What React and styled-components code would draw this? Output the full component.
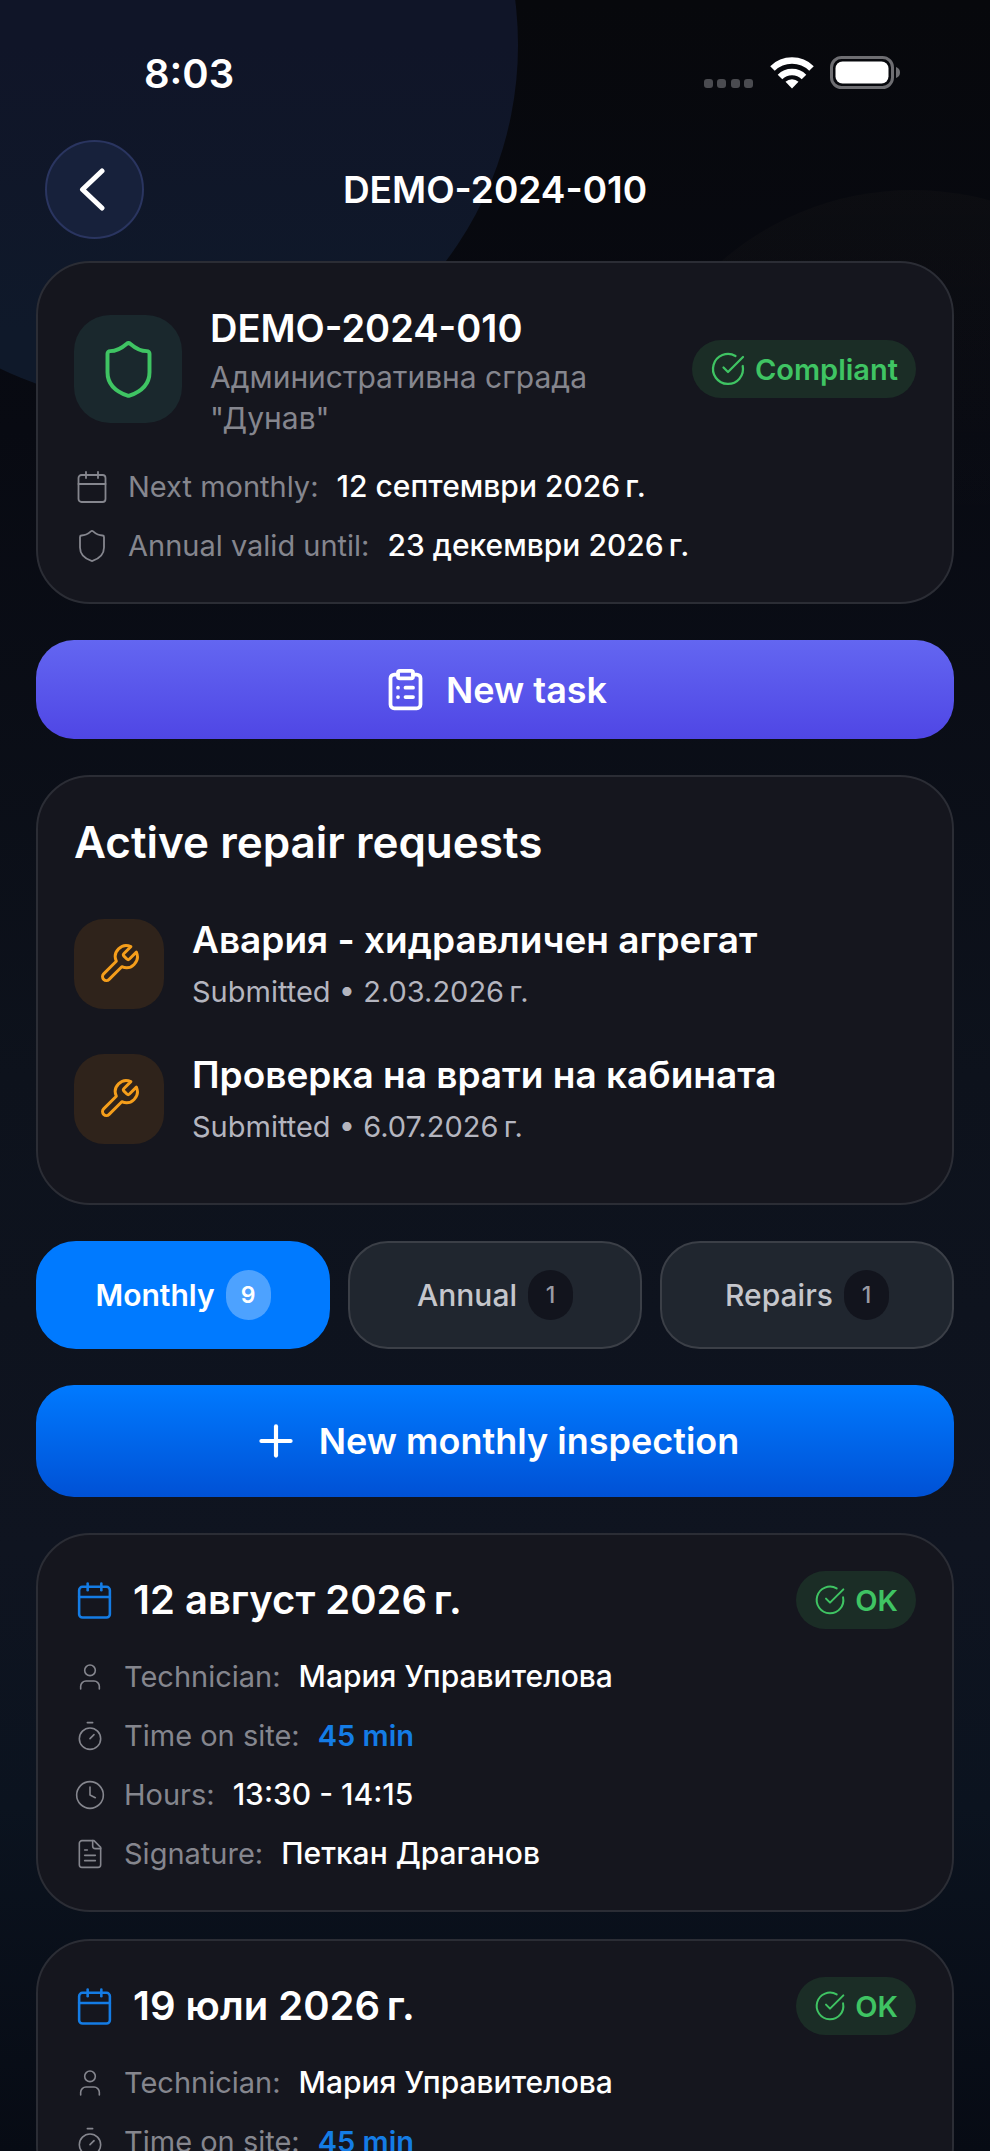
import { useState } from "react";
import styled, { createGlobalStyle, css } from "styled-components";
import {
  Calendar,
  CircleCheckBig,
  ClipboardList,
  Clock,
  Plus,
  Shield,
  Timer,
  User,
} from "lucide-react";

const GlobalStyle = createGlobalStyle`
  * {
    box-sizing: border-box;
  }

  body {
    margin: 0;
    background: #090b12;
    color: #ffffff;
    font-family: "Inter", "Noto Sans", sans-serif;
    -webkit-font-smoothing: antialiased;
  }

  button {
    font-family: inherit;
    cursor: pointer;
  }

  h1, h2, h3, p, dl, dd {
    margin: 0;
  }
`;

const Screen = styled.div`
  position: relative;
  height: 100vh;
  overflow-x: hidden;
  overflow-y: auto;
  scrollbar-width: none;
  background: linear-gradient(180deg, #07080c 0%, #080a12 20%, #0d121c 50%, #0f1420 72%, #0b131f 84%, #070b14 100%);
`;

const Glow = styled.div`
  position: absolute;
  width: 720px;
  height: 720px;
  left: -202px;
  top: -315px;
  border-radius: 50%;
  background: linear-gradient(180deg, #101528 50%, #0f192a 90%);
`;

const WarmGlow = styled.div`
  position: absolute;
  width: 585px;
  height: 585px;
  right: -215px;
  top: 190px;
  border-radius: 50%;
  background: linear-gradient(180deg, rgba(255, 220, 150, 0.02), rgba(255, 220, 150, 0) 60%);
`;

const StatusBar = styled.header`
  position: relative;
  display: flex;
  align-items: center;
  justify-content: space-between;
  height: 140px;
  padding: 6px 90px 0 144px;
`;

const StatusTime = styled.span`
  font-size: 40px;
  font-weight: 600;
`;

const StatusIcons = styled.div`
  display: flex;
  align-items: center;
  gap: 16px;
`;

const NavBar = styled.nav`
  position: relative;
  display: grid;
  grid-template-columns: 99px 1fr 99px;
  align-items: center;
  padding: 0 45px;
`;

const BackButton = styled.button`
  display: flex;
  align-items: center;
  justify-content: center;
  width: 99px;
  height: 99px;
  padding: 0 6px 0 0;
  border: 2px solid #2a3560;
  border-radius: 50%;
  background: #17213b;
  color: #ffffff;
`;

const NavTitle = styled.h1`
  text-align: center;
  font-size: 37px;
  font-weight: 600;
`;

const Content = styled.main`
  position: relative;
  display: flex;
  flex-direction: column;
  gap: 36px;
  padding: 22px 36px 36px;
`;

const Card = styled.section`
  padding: 36px;
  border: 2px solid #2b2d35;
  border-radius: 54px;
  background: #15161e;
`;

const CardHead = styled.div`
  display: flex;
  align-items: center;
  gap: ${({ $gap }) => $gap}px;
`;

const HeadText = styled.div`
  flex: 1;
  min-width: 0;
`;

const UnitTitle = styled.h2`
  font-size: 38px;
  line-height: 58px;
  font-weight: 600;
`;

const UnitPlace = styled.p`
  color: #85868e;
  font-size: 30px;
  line-height: 41px;
`;

const IconTile = styled.span`
  display: flex;
  flex: none;
  align-items: center;
  justify-content: center;
  width: ${({ $size }) => $size}px;
  height: ${({ $size }) => $size}px;
  border-radius: ${({ $size }) => $size / 3}px;
  background: ${({ $bg }) => $bg};
  color: ${({ $color }) => $color};
`;

const Pill = styled.span`
  display: flex;
  flex: none;
  align-items: center;
  gap: 9px;
  height: 58px;
  padding: 0 18px;
  border-radius: 29px;
  background: #1b2d26;
  color: #3fc463;
  font-size: 29px;
  font-weight: 600;
`;

const Rows = styled.dl`
  display: flex;
  flex-direction: column;
  gap: 18px;
  padding-top: 27px;
`;

const Row = styled.div`
  display: flex;
  align-items: center;
  gap: 18px;
  font-size: 29px;
  line-height: 41px;
  color: #85868e;

  svg {
    flex: none;
  }
`;

const RowValue = styled.dd`
  color: ${({ $accent }) => ($accent ? "#147ce5" : "#ffffff")};
  font-size: ${({ $accent }) => ($accent ? 29 : 30)}px;
  font-weight: ${({ $accent }) => ($accent ? 600 : 500)};
`;

const ActionButton = styled.button`
  display: flex;
  align-items: center;
  justify-content: center;
  gap: 18px;
  height: ${({ $height }) => $height}px;
  border: none;
  border-radius: 38px;
  background: linear-gradient(180deg, ${({ $from }) => $from}, ${({ $to }) => $to});
  color: #ffffff;
  font-size: 36px;
  font-weight: 600;
`;

const SectionTitle = styled.h2`
  font-size: 44px;
  line-height: 58px;
  font-weight: 600;
`;

const RequestList = styled.ul`
  display: flex;
  flex-direction: column;
  gap: 38px;
  margin: 0;
  padding: 44px 0 20px;
  list-style: none;
`;

const Request = styled.li`
  display: flex;
  align-items: center;
  gap: 28px;
`;

const RequestText = styled.div`
  display: flex;
  flex-direction: column;
  gap: 7px;
`;

const RequestTitle = styled.h3`
  font-size: 37px;
  line-height: 50px;
  font-weight: 600;
`;

const RequestMeta = styled.p`
  color: #b4b5bf;
  font-size: 29px;
  line-height: 40px;
`;

const Tabs = styled.div`
  display: grid;
  grid-template-columns: repeat(3, 1fr);
  gap: 18px;
`;

const TabCount = styled.span`
  display: flex;
  align-items: center;
  justify-content: center;
  min-width: 45px;
  height: 50px;
  border-radius: 23px;
  background: #12141d;
  color: #9a9ba3;
  font-size: 23px;
`;

const Tab = styled.button`
  display: flex;
  align-items: center;
  justify-content: center;
  gap: 11px;
  height: 108px;
  border: 2px solid #3b3f47;
  border-radius: 40px;
  background: #20262f;
  color: #c5c6cc;
  font-size: 30px;
  font-weight: 500;

  ${({ $active }) =>
    $active &&
    css`
      border-color: #007aff;
      background: #007aff;
      color: #ffffff;
      font-weight: 600;

      ${TabCount} {
        background: #4da2ff;
        color: #ffffff;
      }
    `}
`;

const Inspections = styled.div`
  display: flex;
  flex-direction: column;
  gap: 27px;
`;

const InspectionDate = styled.h3`
  flex: 1;
  font-size: 40px;
  line-height: 58px;
  font-weight: 600;
`;

const requests = [
  { title: "Авария - хидравличен агрегат", date: "2.03.2026\u202fг." },
  { title: "Проверка на врати на кабината", date: "6.07.2026\u202fг." },
];

const tabs = [
  { name: "Monthly", count: 9 },
  { name: "Annual", count: 1 },
  { name: "Repairs", count: 1 },
];

const inspections = [
  {
    date: "12 август 2026\u202fг.",
    technician: "Мария Управителова",
    time: "45 min",
    hours: "13:30 - 14:15",
    signature: "Петкан Драганов",
  },
  {
    date: "19 юли 2026\u202fг.",
    technician: "Мария Управителова",
    time: "45 min",
  },
];

function Signal() {
  return (
    <svg width="50" height="32" viewBox="0 0 50 32" fill="#4a4b50">
      <rect x="0" y="22" width="9" height="9" rx="3" />
      <rect x="13" y="22" width="9" height="9" rx="3" />
      <rect x="27" y="22" width="9" height="9" rx="3" />
      <rect x="40" y="22" width="9" height="9" rx="3" />
    </svg>
  );
}

function Wifi() {
  return (
    <svg width="44" height="32" viewBox="0 0 44 32" fill="none" stroke="#fff" strokeWidth="6.5">
      <path d="M2.5 11.500a28 28 0 0 1 39 0" />
      <path d="M10 20a17 17 0 0 1 24 0" />
      <path d="M22 31.500l-6.500-6.800a9.500 9.500 0 0 1 13 0z" fill="#fff" stroke="none" />
    </svg>
  );
}

function Battery() {
  return (
    <svg width="70" height="34" viewBox="0 0 70 34" fill="none">
      <rect x="1.500" y="1.500" width="61" height="30" rx="10" stroke="#6e6e72" strokeWidth="3" />
      <rect x="5.500" y="5.500" width="53" height="22" rx="7" fill="#fff" />
      <path d="M66 11c3 1 4 3 4 5.500s-1 4.500-4 5.500z" fill="#6e6e72" />
    </svg>
  );
}

function BackArrow() {
  return (
    <svg
      width="26"
      height="43"
      viewBox="0 0 26 43"
      fill="none"
      stroke="currentColor"
      strokeWidth="5"
      strokeLinecap="round"
      strokeLinejoin="round"
    >
      <path d="M23 3L3.500 21.500L23 40" />
    </svg>
  );
}

function Wrench() {
  return (
    <svg
      width="44"
      height="44"
      viewBox="0 0 24 24"
      fill="none"
      stroke="currentColor"
      strokeWidth="1.6"
      strokeLinecap="round"
      strokeLinejoin="round"
    >
      <path d="M14.7 6.3a1 1 0 0 0 0 1.4l1.6 1.6a1 1 0 0 0 1.4 0l3.77-3.77a6 6 0 0 1-7.94 7.94l-6.91 6.91a2.12 2.12 0 0 1-3-3l6.91-6.91a6 6 0 0 1 7.94-7.94l-3.76 3.76z" />
    </svg>
  );
}

function FileText({ size }) {
  return (
    <svg
      width={size}
      height={size}
      viewBox="0 0 24 24"
      fill="none"
      stroke="currentColor"
      strokeWidth="1.2"
      strokeLinecap="round"
      strokeLinejoin="round"
    >
      <path d="M15 2H6a2 2 0 0 0-2 2v16a2 2 0 0 0 2 2h12a2 2 0 0 0 2-2V7Z" />
      <path d="M14 2v4a2 2 0 0 0 2 2h4" />
      <path d="M10 9H8" />
      <path d="M16 13H8" />
      <path d="M16 17H8" />
    </svg>
  );
}

function InfoRow({ icon, label, value, accent }) {
  return (
    <Row>
      {icon}
      <dt>{label}</dt>
      <RowValue $accent={accent} lang="bg">
        {value}
      </RowValue>
    </Row>
  );
}

function InspectionCard({ item }) {
  return (
    <Card>
      <CardHead $gap={18}>
        <Calendar size={41} strokeWidth={1.5} color="#147ce5" />
        <InspectionDate lang="bg">{item.date}</InspectionDate>
        <Pill>
          <CircleCheckBig size={32} strokeWidth={1.5} />
          OK
        </Pill>
      </CardHead>
      <Rows>
        <InfoRow icon={<User size={32} strokeWidth={1.2} />} label="Technician:" value={item.technician} />
        <InfoRow icon={<Timer size={32} strokeWidth={1.2} />} label="Time on site:" value={item.time} accent />
        {item.hours && (
          <InfoRow icon={<Clock size={32} strokeWidth={1.2} />} label="Hours:" value={item.hours} />
        )}
        {item.signature && (
          <InfoRow icon={<FileText size={32} />} label="Signature:" value={item.signature} />
        )}
      </Rows>
    </Card>
  );
}

function App() {
  const [activeTab, setActiveTab] = useState("Monthly");

  return (
    <Screen>
      <GlobalStyle />
      <Glow />
      <WarmGlow />
      <StatusBar>
        <StatusTime>8:03</StatusTime>
        <StatusIcons>
          <Signal />
          <Wifi />
          <Battery />
        </StatusIcons>
      </StatusBar>
      <NavBar>
        <BackButton aria-label="Back">
          <BackArrow />
        </BackButton>
        <NavTitle>DEMO-2024-010</NavTitle>
      </NavBar>
      <Content>
        <Card>
          <CardHead $gap={28}>
            <IconTile $size={108} $bg="#1a282d" $color="#3fc463">
              <Shield size={63} strokeWidth={1.5} />
            </IconTile>
            <HeadText>
              <UnitTitle>DEMO-2024-010</UnitTitle>
              <UnitPlace lang="bg">Административна сграда "Дунав"</UnitPlace>
            </HeadText>
            <Pill>
              <CircleCheckBig size={36} strokeWidth={1.5} />
              Compliant
            </Pill>
          </CardHead>
          <Rows>
            <InfoRow
              icon={<Calendar size={36} strokeWidth={1.2} />}
              label="Next monthly:"
              value={"12 септември 2026\u202fг."}
            />
            <InfoRow
              icon={<Shield size={36} strokeWidth={1.2} />}
              label="Annual valid until:"
              value={"23 декември 2026\u202fг."}
            />
          </Rows>
        </Card>

        <ActionButton $height={99} $from="#6366f1" $to="#4f46e5">
          <ClipboardList size={45} />
          New task
        </ActionButton>

        <Card>
          <SectionTitle>Active repair requests</SectionTitle>
          <RequestList>
            {requests.map((request) => (
              <Request key={request.title}>
                <IconTile $size={90} $bg="#2f231b" $color="#f59e1b">
                  <Wrench />
                </IconTile>
                <RequestText>
                  <RequestTitle lang="bg">{request.title}</RequestTitle>
                  <RequestMeta lang="bg">Submitted • {request.date}</RequestMeta>
                </RequestText>
              </Request>
            ))}
          </RequestList>
        </Card>

        <Tabs role="tablist">
          {tabs.map((tab) => (
            <Tab
              key={tab.name}
              role="tab"
              aria-selected={tab.name === activeTab}
              $active={tab.name === activeTab}
              onClick={() => setActiveTab(tab.name)}
            >
              {tab.name}
              <TabCount>{tab.count}</TabCount>
            </Tab>
          ))}
        </Tabs>

        <ActionButton $height={112} $from="#007aff" $to="#0051d5">
          <Plus size={50} />
          New monthly inspection
        </ActionButton>

        <Inspections>
          {inspections.map((item) => (
            <InspectionCard key={item.date} item={item} />
          ))}
        </Inspections>
      </Content>
    </Screen>
  );
}

export default App;
